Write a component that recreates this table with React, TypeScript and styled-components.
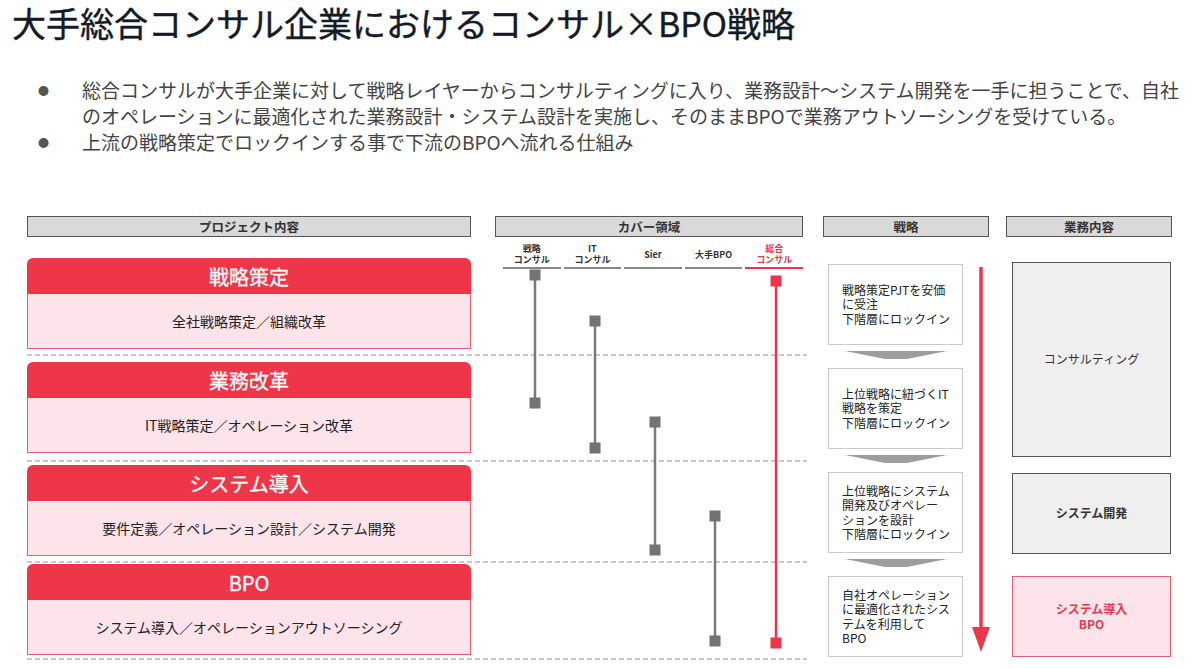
import React from 'react'
import styled, { createGlobalStyle } from 'styled-components'

const GlobalStyle = createGlobalStyle`
  body {
    margin: 0;
    background: #ffffff;
    font-family: "Noto Sans CJK JP", "Noto Sans", sans-serif;
  }
`

const Page = styled.div`
  width: 1200px;
  height: 668px;
  overflow: hidden;
  position: relative;
`

const Title = styled.h1`
  margin: 0;
  padding: 0 0 0 12px;
  font-size: 34px;
  line-height: 46px;
  font-weight: 400;
  color: #141b28;
  -webkit-text-stroke: 0.4px #141b28;
`

const Bullets = styled.ul`
  list-style: none;
  margin: 31px 0 0 0;
  padding: 0 0 0 38px;
`

const Bullet = styled.li`
  display: flex;
  font-size: 19px;
  line-height: 26px;
  color: #444;
`

const Dot = styled.span`
  flex: 0 0 44px;
  font-size: 11px;
  color: #555;
`

const BulletText = styled.span`
  width: 1112px;
`

const Main = styled.div`
  display: flex;
  margin-top: 61px;
  padding-left: 27px;
`

const LeftGroup = styled.div`
  width: 780px;
  display: flex;
  flex-direction: column;
`

const HeaderRow = styled.div`
  display: flex;
  gap: 24px;
`

const ColHeader = styled.div<{ $w: number }>`
  box-sizing: border-box;
  width: ${p => p.$w}px;
  height: 21px;
  background: #d9d9d9;
  border: 1.5px solid #555;
  display: flex;
  align-items: center;
  justify-content: center;
  font-size: 12.5px;
  font-weight: 700;
  color: #333;
`

const Body = styled.div`
  position: relative;
  padding-top: 11px;
`

const Row = styled.div<{ $pt: number; $pb: number }>`
  padding-top: ${p => p.$pt}px;
  padding-bottom: ${p => p.$pb}px;
  background-image: linear-gradient(to right, #c8c8c8 0 5px, transparent 5px 8px);
  background-size: 8px 2px;
  background-repeat: repeat-x;
  background-position: left bottom;
`

const Block = styled.div`
  width: 444px;
`

const BlockHead = styled.div`
  height: 36px;
  background: #ef3649;
  border-radius: 6px 6px 0 0;
  display: flex;
  align-items: center;
  justify-content: center;
  color: #fff;
  font-size: 20px;
  font-weight: 400;
  -webkit-text-stroke: 0.3px #fff;
`

const BlockBody = styled.div`
  box-sizing: border-box;
  height: 55px;
  background: #fce4ea;
  border: 1.5px solid #e4606f;
  border-top: none;
  display: flex;
  align-items: center;
  justify-content: center;
  font-size: 14px;
  color: #222;
`

const Coverage = styled.div`
  position: absolute;
  left: 476px;
  top: 0;
  bottom: 0;
  width: 300px;
`

const SubHeads = styled.div`
  display: grid;
  grid-template-columns: repeat(5, 1fr);
  column-gap: 3px;
  margin-top: 5px;
`

const SubHead = styled.div<{ $red?: boolean }>`
  height: 24px;
  display: flex;
  flex-direction: column;
  justify-content: center;
  align-items: center;
  border-bottom: 2px solid ${p => (p.$red ? '#ee3449' : '#888')};
  font-size: 9px;
  line-height: 11px;
  font-weight: 700;
  color: ${p => (p.$red ? '#ee3449' : '#333')};
  padding-bottom: 1px;
`

const Chart = styled.svg`
  position: absolute;
  left: 0;
  top: 0;
  pointer-events: none;
`

const StrategyCol = styled.div`
  width: 166px;
  margin-left: 16px;
  display: flex;
  flex-direction: column;
`

const StrategyBody = styled.div`
  position: relative;
  padding: 27px 0 0 5px;
`

const StratBox = styled.div`
  box-sizing: border-box;
  width: 135px;
  height: 81px;
  border: 1.5px solid #c9c9c9;
  background: #fff;
  padding-left: 13px;
  display: flex;
  flex-direction: column;
  justify-content: center;
  font-size: 12px;
  line-height: 14.5px;
  color: #222;
`

const Chevron = styled.div`
  height: 23px;
  padding: 6px 0 0 17px;
  box-sizing: border-box;
  line-height: 0;
`

const DownArrow = styled.svg`
  position: absolute;
  left: 149px;
  top: 30px;
`

const BizCol = styled.div`
  width: 166px;
  margin-left: 17px;
  display: flex;
  flex-direction: column;
`

const BizBody = styled.div`
  padding: 25px 0 0 6px;
  display: flex;
  flex-direction: column;
`

const BizBox = styled.div<{ $h: number; $mt: number; $pink?: boolean; $bold?: boolean }>`
  box-sizing: border-box;
  width: 159px;
  height: ${p => p.$h}px;
  margin-top: ${p => p.$mt}px;
  background: ${p => (p.$pink ? '#fce4ea' : '#efefef')};
  border: 1.5px solid ${p => (p.$pink ? '#e8606e' : '#555')};
  display: flex;
  flex-direction: column;
  align-items: center;
  justify-content: center;
  text-align: center;
  font-size: 12px;
  line-height: 14.5px;
  font-weight: ${p => (p.$pink || p.$bold ? 700 : 400)};
  color: ${p => (p.$pink ? '#e8384c' : '#333')};
`

const rows = [
  { title: '戦略策定', body: '全社戦略策定／組織改革', pt: 10, pb: 7 },
  { title: '業務改革', body: 'IT戦略策定／オペレーション改革', pt: 6, pb: 9 },
  { title: 'システム導入', body: '要件定義／オペレーション設計／システム開発', pt: 3, pb: 7 },
  { title: 'BPO', body: 'システム導入／オペレーションアウトソーシング', pt: 1, pb: 5 },
]

const players = [
  { lines: ['戦略', 'コンサル'] },
  { lines: ['IT', 'コンサル'] },
  { lines: ['Sier'] },
  { lines: ['大手BPO'] },
  { lines: ['総合', 'コンサル'], red: true },
]

// x in chart coords, from / to in chart coords
const spans = [
  { x: 32, from: 38, to: 166 },
  { x: 92, from: 84, to: 211 },
  { x: 152, from: 185, to: 313 },
  { x: 212, from: 279, to: 404 },
  { x: 273, from: 44, to: 406, red: true },
]

const strategies = [
  ['戦略策定PJTを安価', 'に受注', '下階層にロックイン'],
  ['上位戦略に紐づくIT', '戦略を策定', '下階層にロックイン'],
  ['上位戦略にシステム', '開発及びオペレー', 'ションを設計', '下階層にロックイン'],
  ['自社オペレーション', 'に最適化されたシス', 'テムを利用して', 'BPO'],
]

const App = () => {
  return (
    <Page>
      <GlobalStyle />
      <Title>大手総合コンサル企業におけるコンサル×BPO戦略</Title>
      <Bullets>
        <Bullet>
          <Dot>●</Dot>
          <BulletText>
            総合コンサルが大手企業に対して戦略レイヤーからコンサルティングに入り、業務設計～システム開発を一手に担うことで、自社
            <br />
            のオペレーションに最適化された業務設計・システム設計を実施し、そのままBPOで業務アウトソーシングを受けている。
          </BulletText>
        </Bullet>
        <Bullet>
          <Dot>●</Dot>
          <BulletText>上流の戦略策定でロックインする事で下流のBPOへ流れる仕組み</BulletText>
        </Bullet>
      </Bullets>

      <Main>
        <LeftGroup>
          <HeaderRow>
            <ColHeader $w={444}>プロジェクト内容</ColHeader>
            <ColHeader $w={308}>カバー領域</ColHeader>
          </HeaderRow>
          <Body>
            {rows.map(r => (
              <Row key={r.title} $pt={r.pt} $pb={r.pb}>
                <Block>
                  <BlockHead>{r.title}</BlockHead>
                  <BlockBody>{r.body}</BlockBody>
                </Block>
              </Row>
            ))}
            <Coverage>
              <SubHeads>
                {players.map((p, i) => (
                  <SubHead key={i} $red={p.red}>
                    {p.lines.map(l => (
                      <span key={l}>{l}</span>
                    ))}
                  </SubHead>
                ))}
              </SubHeads>
              <Chart width={300} height={424} viewBox="0 0 300 424">
                {spans.map((s, i) => {
                  const c = s.red ? '#ee3449' : '#737373'
                  return (
                    <g key={i}>
                      <line x1={s.x} y1={s.from} x2={s.x} y2={s.to} stroke={s.red ? '#ee3449' : '#7a7a7a'} strokeWidth={2.5} />
                      <rect x={s.x - 5.5} y={s.from - 5.5} width={11} height={11} fill={c} />
                      <rect x={s.x - 5.5} y={s.to - 5.5} width={11} height={11} fill={c} />
                    </g>
                  )
                })}
              </Chart>
            </Coverage>
          </Body>
        </LeftGroup>

        <StrategyCol>
          <ColHeader $w={166}>戦略</ColHeader>
          <StrategyBody>
            {strategies.map((lines, i) => (
              <React.Fragment key={i}>
                <StratBox>
                  {lines.map(l => (
                    <span key={l}>{l}</span>
                  ))}
                </StratBox>
                {i < strategies.length - 1 && (
                  <Chevron>
                    <svg width={102} height={8} viewBox="0 0 102 8">
                      <polygon points="0,0 102,0 62,8 40,8" fill="#9d9d9d" />
                    </svg>
                  </Chevron>
                )}
              </React.Fragment>
            ))}
            <DownArrow width={18} height={386} viewBox="0 0 18 386">
              <line x1={9} y1={0} x2={9} y2={362} stroke="#e8384c" strokeWidth={3.5} />
              <polygon points="0,360 18,360 9,385" fill="#e8384c" />
            </DownArrow>
          </StrategyBody>
        </StrategyCol>

        <BizCol>
          <ColHeader $w={166}>業務内容</ColHeader>
          <BizBody>
            <BizBox $h={195} $mt={0}>コンサルティング</BizBox>
            <BizBox $h={81} $mt={16} $bold>システム開発</BizBox>
            <BizBox $h={81} $mt={22} $pink>
              <span>システム導入</span>
              <span>BPO</span>
            </BizBox>
          </BizBody>
        </BizCol>
      </Main>
    </Page>
  )
}

export default App
